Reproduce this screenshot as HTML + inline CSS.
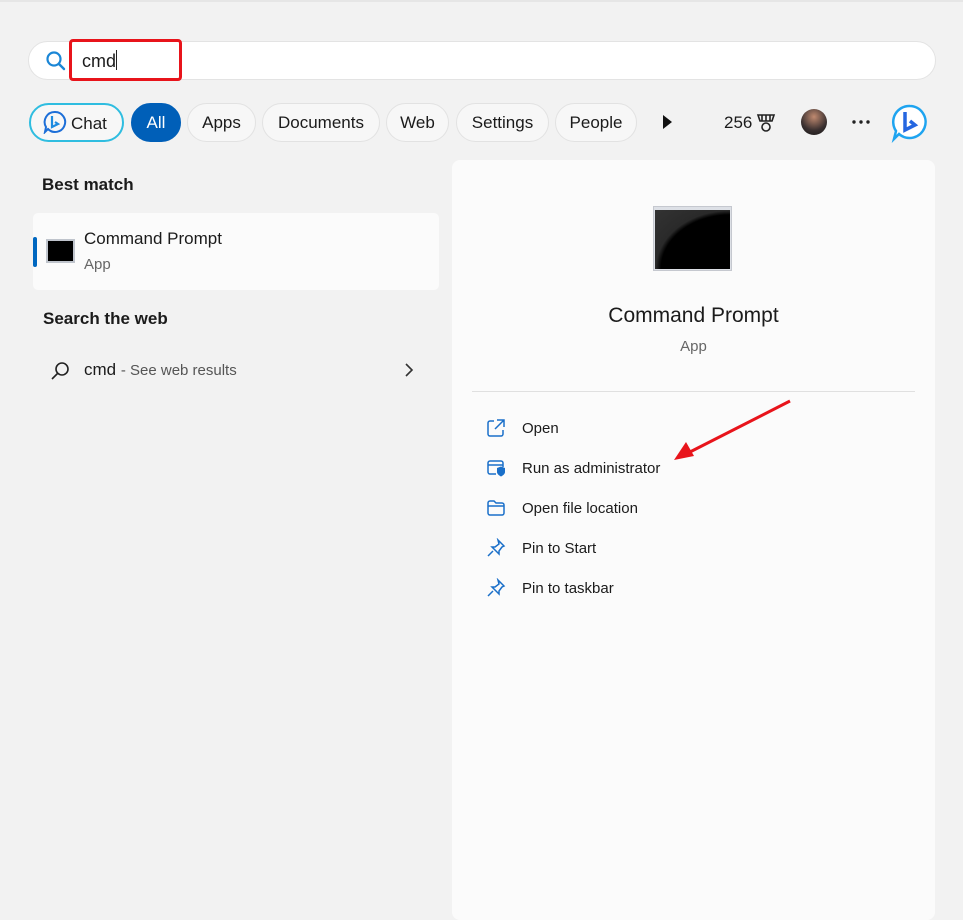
<!DOCTYPE html>
<html><head><style>
*{margin:0;padding:0;box-sizing:border-box}
body{width:963px;height:902px;background:#f2f2f2;font-family:"Liberation Sans",sans-serif;color:#1b1b1b;position:relative;overflow:hidden}
.a{position:absolute}
.chip{position:absolute;top:103px;height:39px;border:1px solid #e2e2e2;border-radius:20px;background:#f7f7f7;font-size:17px;line-height:37px;text-align:center}
.act{position:absolute;left:522px;font-size:15px}
.ic{position:absolute;left:486px}
</style></head><body>
<div class="a" style="left:0;top:0;width:963px;height:2px;background:#e6e6e6"></div>
<div class="a" style="left:28px;top:41px;width:908px;height:39px;background:#fff;border:1px solid #e3e3e3;border-radius:20px"></div>
<svg class="a" style="left:45px;top:50px" width="22" height="22" viewBox="0 0 22 22"><circle cx="9" cy="9" r="6.5" fill="none" stroke="#1a86d6" stroke-width="2.2"/><path d="M14 14l5 5" stroke="#1a86d6" stroke-width="2.4" stroke-linecap="round"/></svg>
<div class="a" style="left:69px;top:39px;width:113px;height:42px;border:3px solid #e8141b;border-radius:4px"></div>
<div class="a" style="left:82px;top:50px;font-size:18px">cmd<span style="display:inline-block;width:1px;height:20px;background:#222;vertical-align:-3px"></span></div>

<div class="chip" style="left:29px;width:95px;border:2.5px solid #2fbde0;background:#f7f7f7;text-align:left;padding-left:40px">Chat</div>
<svg class="a" style="left:43px;top:110px" width="24" height="24" viewBox="0 0 24 24"><path d="M12 2a10 10 0 1 1-7 17l-3 3 1-5A10 10 0 0 1 12 2z" fill="none" stroke="#1d6fd8" stroke-width="2"/><path d="M9 6v11l6-3-3-2" fill="none" stroke="#1d8be0" stroke-width="2.2"/></svg>
<div class="chip" style="left:131px;width:50px;background:#005fb8;border-color:#005fb8;color:#fff">All</div>
<div class="chip" style="left:187px;width:69px">Apps</div>
<div class="chip" style="left:262px;width:118px">Documents</div>
<div class="chip" style="left:386px;width:63px">Web</div>
<div class="chip" style="left:456px;width:93px">Settings</div>
<div class="chip" style="left:555px;width:82px">People</div>
<svg class="a" style="left:661px;top:114px" width="12" height="16"><path d="M2 1l9 7-9 7z" fill="#111"/></svg>
<div class="a" style="left:724px;top:113px;font-size:17px">256</div>
<svg class="a" style="left:755px;top:112px" width="22" height="22" viewBox="0 0 22 22"><path d="M3 3h16l-2 6H5z M7 3v6 M11 3v6 M15 3v6" fill="none" stroke="#222" stroke-width="1.6"/><circle cx="11" cy="15" r="4" fill="none" stroke="#222" stroke-width="1.6"/></svg>
<div class="a" style="left:801px;top:109px;width:26px;height:26px;border-radius:50%;background:radial-gradient(circle at 50% 30%,#c08a70,#3a3030 60%,#151515)"></div>
<svg class="a" style="left:851px;top:119px" width="20" height="6"><circle cx="3" cy="3" r="1.7" fill="#222"/><circle cx="10" cy="3" r="1.7" fill="#222"/><circle cx="17" cy="3" r="1.7" fill="#222"/></svg>
<svg class="a" style="left:890px;top:103px" width="40" height="40" viewBox="0 0 40 40"><path d="M20 3a16 16 0 1 1-11 28l-5 5 2-8A16 16 0 0 1 20 3z" fill="#fff" stroke="#1ea4f0" stroke-width="2.5"/><path d="M15 9v18l10-5-5-4" fill="none" stroke="#2566e0" stroke-width="3.5"/></svg>

<div class="a" style="left:42px;top:175px;font-size:17px;font-weight:bold">Best match</div>
<div class="a" style="left:33px;top:213px;width:406px;height:77px;background:#fbfbfb;border-radius:5px"></div>
<div class="a" style="left:33px;top:237px;width:4px;height:30px;background:#0067c0;border-radius:2px"></div>
<div class="a" style="left:46px;top:239px;width:29px;height:24px;background:#000;border:2px solid #bfc4cc"></div>
<div class="a" style="left:84px;top:229px;font-size:17px">Command Prompt</div>
<div class="a" style="left:84px;top:256px;font-size:15px;color:#666">App</div>
<div class="a" style="left:43px;top:309px;font-size:17px;font-weight:bold">Search the web</div>
<svg class="a" style="left:50px;top:360px" width="22" height="22" viewBox="0 0 22 22"><circle cx="12" cy="9" r="6" fill="none" stroke="#222" stroke-width="1.6"/><path d="M8 13l-6 6" stroke="#222" stroke-width="1.6"/></svg>
<div class="a" style="left:84px;top:360px;font-size:17px">cmd <span style="font-size:15px;color:#555">- See web results</span></div>
<svg class="a" style="left:404px;top:363px" width="10" height="14"><path d="M2 1l6 6-6 6" fill="none" stroke="#333" stroke-width="1.6"/></svg>

<div class="a" style="left:452px;top:160px;width:483px;height:760px;background:#fbfbfb;border-radius:8px"></div>
<div class="a" style="left:653px;top:206px;width:79px;height:65px;background:#dde0e6;border:1px solid #c5c8cf"><div style="position:absolute;left:1px;top:3px;width:75px;height:59px;background:radial-gradient(ellipse at 100% 100%,#000 65%,#2a2a2a 70%,#333)"></div></div>
<div class="a" style="left:452px;top:304px;width:483px;text-align:center;font-size:21px">Command Prompt</div>
<div class="a" style="left:452px;top:338px;width:483px;text-align:center;font-size:15px;color:#666">App</div>
<div class="a" style="left:472px;top:391px;width:443px;height:1px;background:#e0e0e0"></div>
<svg class="ic" style="top:418px" width="20" height="20" viewBox="0 0 20 20"><path d="M8 3H4a2 2 0 0 0-2 2v11a2 2 0 0 0 2 2h11a2 2 0 0 0 2-2v-4M11 2h7v7M18 2l-9 9" fill="none" stroke="#1a6fc9" stroke-width="1.5"/></svg>
<div class="act" style="top:420px">Open</div>
<svg class="ic" style="top:458px" width="20" height="20" viewBox="0 0 20 20"><path d="M10 16H4a2 2 0 0 1-2-2V5a2 2 0 0 1 2-2h11a2 2 0 0 1 2 2v4M2 7h15" fill="none" stroke="#1a6fc9" stroke-width="1.5"/><path d="M11 10l4-1.5 4 1.5v4c0 2-2 3.5-4 4.5-2-1-4-2.5-4-4.5z" fill="#1a6fc9"/></svg>
<div class="act" style="top:460px">Run as administrator</div>
<svg class="ic" style="top:498px" width="20" height="20" viewBox="0 0 20 20"><path d="M2 5a2 2 0 0 1 2-2h4l2 2h6a2 2 0 0 1 2 2v8a2 2 0 0 1-2 2H4a2 2 0 0 1-2-2zM2 8h16" fill="none" stroke="#1a6fc9" stroke-width="1.5"/></svg>
<div class="act" style="top:500px">Open file location</div>
<svg class="ic" style="top:538px" width="20" height="20" viewBox="0 0 20 20"><path d="M12 2l6 6-2 1-3 4 0 3-7-7 3 0 4-3zM7 13l-5 5" fill="none" stroke="#1a6fc9" stroke-width="1.5"/></svg>
<div class="act" style="top:540px">Pin to Start</div>
<svg class="ic" style="top:578px" width="20" height="20" viewBox="0 0 20 20"><path d="M12 2l6 6-2 1-3 4 0 3-7-7 3 0 4-3zM7 13l-5 5" fill="none" stroke="#1a6fc9" stroke-width="1.5"/></svg>
<div class="act" style="top:580px">Pin to taskbar</div>
<svg class="a" style="left:668px;top:396px" width="130" height="70"><path d="M122 5L18 58" stroke="#e8141b" stroke-width="3"/><path d="M6 64l12-18 8 14z" fill="#e8141b"/></svg>
</body></html>
